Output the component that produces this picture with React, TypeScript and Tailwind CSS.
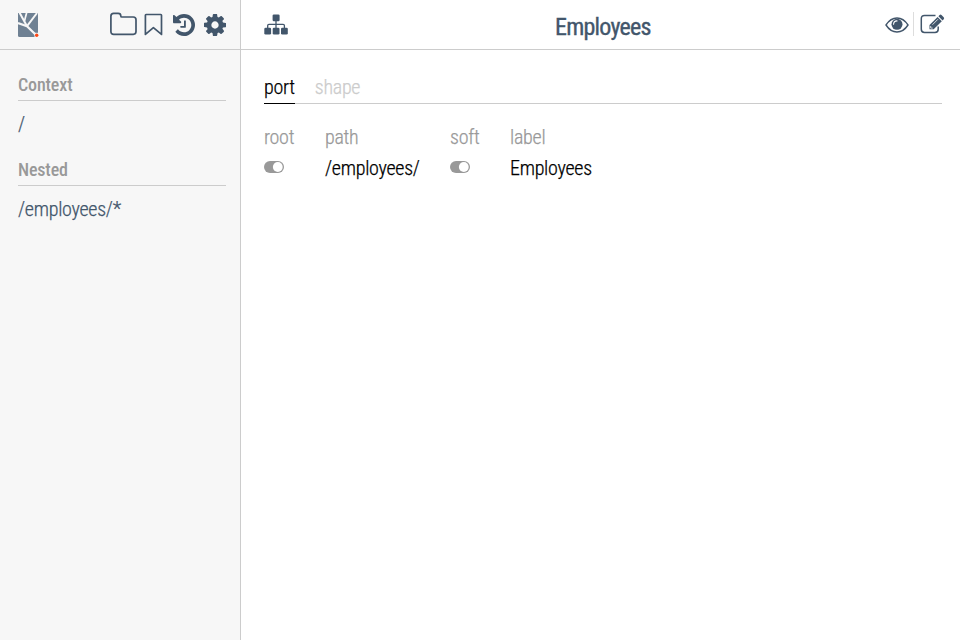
import type { ReactNode } from "react";

const ink = "#42566b";

function Logo() {
  return (
    <svg className="block shrink-0" width="21" height="26" viewBox="0 0 21 26">
      <path d="M0 1H20V21L17 25H1.500Q0 25 0 23.500Z" fill="#6f8193" />
      <g stroke="#f7f7f7" fill="none">
        <path d="M0 11L9 14.200L18 23" strokeWidth="2.200" />
        <path d="M1.200 0L9 14.200" strokeWidth="2" />
        <path d="M8.800 0L6.500 9" strokeWidth="1.700" />
        <path d="M19 1L9 14.200" strokeWidth="2" />
      </g>
      <rect x="16.500" y="20.800" width="5" height="6" fill="#f7f7f7" />
      <circle cx="18.700" cy="23.300" r="1.700" fill="#ff4713" />
    </svg>
  );
}

function Folder() {
  return (
    <svg width="27" height="24" viewBox="0 0 27 24" fill="none" stroke={ink} strokeWidth="1.700">
      <path d="M0.900 4.200Q0.900 1.400 3.700 1.400H8.200Q10.800 1.400 10.800 4Q10.800 5 11.800 5H23.300Q26 5 26 7.700V19.600Q26 22.300 23.300 22.300H3.700Q0.900 22.300 0.900 19.600Z" />
    </svg>
  );
}

function Bookmark() {
  return (
    <svg width="19" height="23" viewBox="0 0 19 23" fill="none" stroke={ink} strokeWidth="1.700">
      <path d="M2 1.500H16.800Q17.500 1.500 17.500 2.200V21.400L9.400 14.700L1.400 21.400V2.200Q1.400 1.500 2 1.500Z" strokeLinejoin="round" />
    </svg>
  );
}

function History() {
  return (
    <svg width="22" height="22" viewBox="128 128 1536 1536" fill={ink}>
      <path d="M1664 896q0 156-61 298t-164 245-245 164-298 61q-172 0-327-72.500t-264-204.500q-7-10-6.500-22.500t8.500-20.500l137-138q10-9 25-9 16 2 23 12 73 95 179 147t225 52q104 0 198.500-40.500t163.500-109.500 109.500-163.500 40.500-198.500-40.500-198.500-109.500-163.500-163.500-109.500-198.500-40.500q-98 0-188 35.500t-160 101.500l137 138q31 30 14 69-17 40-59 40h-448q-26 0-45-19t-19-45v-448q0-42 40-59 39-17 69 14l130 129q107-101 244.500-156.500t284.500-55.500q156 0 298 61t245 164 164 245 61 298zm-640-288v448q0 14-9 23t-23 9h-320q-14 0-23-9t-9-23v-64q0-14 9-23t23-9h224v-352q0-14 9-23t23-9h64q14 0 23 9t9 23z" />
    </svg>
  );
}

function Cog() {
  return (
    <svg width="22" height="22" viewBox="128 128 1536 1536" fill={ink}>
      <path d="M1152 896q0-106-75-181t-181-75-181 75-75 181 75 181 181 75 181-75 75-181zm512-109v222q0 12-8 23t-20 13l-185 28q-19 54-39 91 35 50 107 138 10 12 10 25t-9 23q-27 37-99 108t-94 71q-12 0-26-9l-138-108q-44 23-91 38-16 136-29 186-7 28-36 28h-222q-14 0-24.500-8.500t-11.500-21.500l-28-184q-49-16-90-37l-141 107q-10 9-25 9-14 0-25-11-126-114-165-168-7-10-7-23 0-12 8-23 15-21 51-66.500t54-70.500q-27-50-41-99l-183-27q-13-2-21-12.500t-8-23.500v-222q0-12 8-23t19-13l186-28q14-46 39-92-40-57-107-138-10-12-10-24 0-10 9-23 26-36 98.500-107.500t94.500-71.500q13 0 26 10l138 107q44-23 91-38 16-136 29-186 7-28 36-28h222q14 0 24.500 8.500t11.500 21.500l28 184q49 16 90 37l142-107q9-9 24-9 13 0 25 10 129 119 165 170 7 8 7 22 0 12-8 23-15 21-51 66.500t-54 70.500q26 50 41 98l183 28q13 2 21 12.500t8 23.500z" />
    </svg>
  );
}

function Sitemap() {
  return (
    <svg width="24" height="21" viewBox="0 0 24 21" fill={ink}>
      <rect x="8.600" y="0.500" width="7" height="6.800" rx="1.300" />
      <rect x="0.300" y="13.800" width="6.800" height="6.800" rx="1.300" />
      <rect x="8.700" y="13.800" width="6.800" height="6.800" rx="1.300" />
      <rect x="17" y="13.800" width="6.800" height="6.800" rx="1.300" />
      <path d="M12 7V14M3.700 14V11.500Q3.700 10.300 4.900 10.300H19.100Q20.400 10.300 20.400 11.500V14" fill="none" stroke={ink} strokeWidth="1.300" />
    </svg>
  );
}

function Eye() {
  return (
    <svg width="24" height="16" viewBox="0 0 24 16">
      <path d="M1 8Q5.500 1 12 1T23 8Q18.500 15 12 15T1 8Z" fill="none" stroke={ink} strokeWidth="1.400" />
      <circle cx="12" cy="7.300" r="5.500" fill={ink} />
      <path d="M8.600 7.200Q8.700 4 12 3.900" fill="none" stroke="#fff" strokeWidth="1.100" strokeLinecap="round" />
    </svg>
  );
}

function Edit() {
  return (
    <svg width="25" height="20" viewBox="0 0 25 20">
      <path d="M15.500 1.500H4.500Q1.300 1.500 1.300 4.700V15.200Q1.300 18.400 4.500 18.400H15Q18.200 18.400 18.200 15.200V12.500" fill="none" stroke={ink} strokeWidth="1.500" />
      <path d="M9.500 15.300V11L17.600 3L21.800 7.200L13.700 15.300Z" fill={ink} />
      <path d="M18.400 2.200L19.600 1Q20.500 0.100 21.500 1L23.700 3.200Q24.600 4.200 23.700 5.200L22.600 6.400Z" fill={ink} />
      <path d="M12.500 10.700L18 5.200M10.700 12V14.100H12.700" fill="none" stroke="#fff" strokeWidth="0.800" />
    </svg>
  );
}

function Toggle() {
  return (
    <svg className="block" width="20" height="12" viewBox="0 0 20 12">
      <rect width="20" height="12" rx="6" fill="#999" />
      <circle cx="13.800" cy="6" r="4.900" fill="#fff" />
    </svg>
  );
}

function Section({ title, item }: { title: string; item: string }) {
  return (
    <section className="h-[85px]">
      <h2 className="h-[31px] border-b border-[#ccc] text-[18px] leading-[30px] font-medium tracking-[-0.15px] text-[#999]">{title}</h2>
      <a className="block pt-[8px] text-[20px] leading-[30px] tracking-[-0.28px] [-webkit-text-stroke:0.25px]">{item}</a>
    </section>
  );
}

function Field({ label, width, children }: { label: string; width: string; children: ReactNode }) {
  return (
    <div className={width}>
      <div className="h-[31px] text-[#999]">{label}</div>
      <div className="h-[31px]">{children}</div>
    </div>
  );
}

export default function App() {
  return (
    <div className="flex h-[640px] w-[960px] overflow-hidden bg-white font-['Roboto_Condensed','Roboto',sans-serif] font-[340] text-[#42566b] font-stretch-condensed">
      <aside className="w-[241px] shrink-0 border-r border-[#ccc] bg-[#f7f7f7]">
        <header className="flex h-[50px] items-start border-b border-[#ccc] pt-[12px] pl-[18px]">
          <Logo />
          <div className="ml-[71px] flex items-start">
            <Folder />
            <div className="ml-[7px] pt-px"><Bookmark /></div>
            <div className="ml-[10px] pt-[2px]"><History /></div>
            <div className="ml-[9px] pt-[2px]"><Cog /></div>
          </div>
        </header>
        <nav className="pt-[20px] pr-[14px] pl-[18px]">
          <Section title="Context" item="/" />
          <Section title="Nested" item="/employees/*" />
        </nav>
      </aside>
      <main className="min-w-0 flex-1">
        <header className="flex h-[50px] items-start border-b border-[#ccc] pr-[15px] pl-[23px]">
          <div className="w-[291px] pt-[14px]"><Sitemap /></div>
          <h1 className="pt-[12px] text-[24px] leading-[30px] font-[430] tracking-[-0.75px] [-webkit-text-stroke:0.35px]">Employees</h1>
          <div className="ml-auto flex w-[60px] items-start pt-[12px]">
            <div className="pt-[5px]"><Eye /></div>
            <div className="ml-[4px] h-[24px] w-px bg-[#ddd]" />
            <div className="ml-[6px] pt-[2px]"><Edit /></div>
          </div>
        </header>
        <div className="pt-[22px] pr-[18px] pl-[23px] text-[20px] leading-[30px] tracking-[-0.28px] text-black [-webkit-text-stroke:0.25px]">
          <div className="flex h-[32px] gap-[20px] border-b border-[#ccc]">
            <div className="h-[32px] border-b border-black">port</div>
            <div className="text-[#ccc]">shape</div>
          </div>
          <div className="flex pt-[18px]">
            <Field label="root" width="w-[61px]"><div className="pt-[8px]"><Toggle /></div></Field>
            <Field label="path" width="w-[125px]">/employees/</Field>
            <Field label="soft" width="w-[60px]"><div className="pt-[8px]"><Toggle /></div></Field>
            <Field label="label" width="w-[100px]">Employees</Field>
          </div>
        </div>
      </main>
    </div>
  );
}
